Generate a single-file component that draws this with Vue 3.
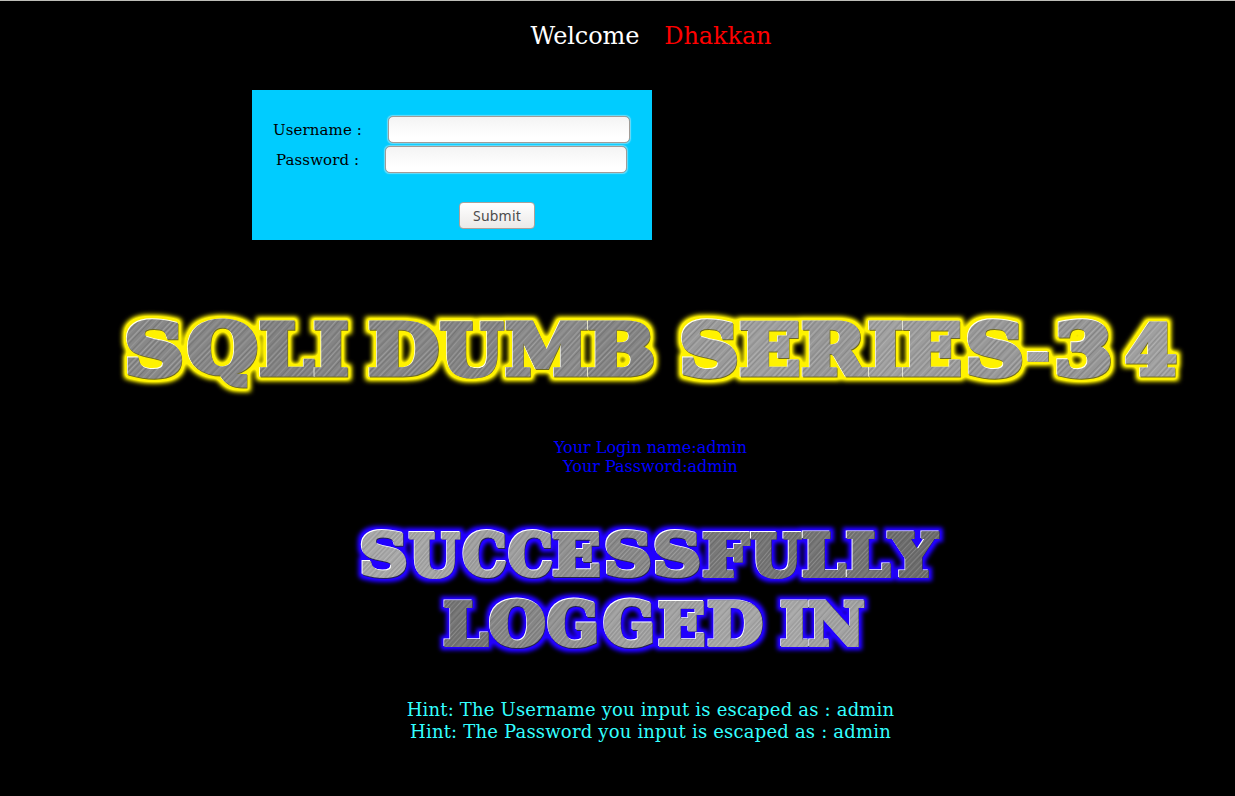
<script setup>
const FAMILY = '"DejaVu Serif", serif'
const SIZE = 80
const ctx = document.createElement('canvas').getContext('2d')
// Measured at a large size so that the ink box keeps its sub-pixel precision.
const MEASURE = 8
ctx.font = `bold ${SIZE * MEASURE}px ${FAMILY}`

// Stretches one character so that its outlined ink fills the box x1..x2, y1..y2.
function glyph([char, x1, x2, y1, y2, tone], weight) {
  const m = ctx.measureText(char)
  const h = weight / 2
  const left = -m.actualBoundingBoxLeft / MEASURE - h
  const right = m.actualBoundingBoxRight / MEASURE + h
  const top = -m.actualBoundingBoxAscent / MEASURE - h
  const bottom = m.actualBoundingBoxDescent / MEASURE + h
  const sx = (x2 - x1) / (right - left)
  const sy = (y2 - y1) / (bottom - top)
  return {
    char,
    tone: `rgb(${tone}, ${tone}, ${tone})`,
    matrix: `matrix(${sx} 0 0 ${sy} ${x1 - left * sx} ${y1 - top * sy})`
  }
}

const title = [
  ['S', 126.5, 182.5, 319, 379, 136], ['Q', 187, 257, 319, 389, 134],
  ['L', 260, 315, 321.5, 377, 130], ['I', 314.5, 347.5, 321.5, 377, 132],
  ['D', 369.3, 438.5, 321.5, 377, 134], ['U', 440, 504.5, 321.5, 378.5, 132],
  ['M', 505, 587.5, 321.5, 377, 138], ['B', 588, 654, 321.5, 377, 132],
  ['S', 681.5, 737.5, 319, 379, 154], ['E', 740.5, 799.5, 321.5, 377, 158],
  ['R', 802.5, 869, 321.5, 377, 152], ['I', 869, 902, 321.5, 377, 160],
  ['E', 902.7, 961, 321.5, 377, 156], ['S', 967.5, 1022.7, 319, 379, 152],
  ['-', 1027.3, 1049, 351, 361.7, 164], ['3', 1056.7, 1111, 319, 379, 150],
  ['4', 1125, 1176.3, 321.5, 377, 160]
].map((g) => glyph(g, 6))

const success = [
  ['S', 361.5, 406.7, 529.5, 578, 168], ['U', 409, 460.7, 531.5, 578.5, 166],
  ['C', 462.7, 506, 529.5, 578, 160], ['C', 508.3, 552, 529.5, 578, 158],
  ['E', 553.3, 600, 531.5, 577, 144], ['S', 606, 650.7, 529.5, 578, 136],
  ['S', 655, 700, 529.5, 578, 136], ['F', 703.3, 750.7, 531.5, 577.5, 120],
  ['U', 750.7, 802.5, 531.5, 578.5, 116], ['L', 802.7, 846.7, 531.5, 577.5, 116],
  ['L', 846.7, 891, 531.5, 577.5, 116], ['Y', 886.7, 940, 531.5, 577.5, 108],
  ['L', 444.3, 489, 600.5, 646.5, 116], ['O', 489, 545, 598.5, 648, 134],
  ['G', 547.3, 596.7, 598.5, 648, 146], ['G', 603.3, 652.7, 598.5, 648, 160],
  ['E', 659, 704.7, 600.5, 646.5, 162], ['D', 708.3, 762.7, 600.5, 646.5, 166],
  ['I', 781, 808.3, 600.5, 646.5, 168], ['N', 808.3, 864.3, 600.5, 646.5, 162]
].map((g) => glyph(g, 5.5))

const scratches = [
  [0, '#fff', 0.2], [2, '#000', 0.12], [4, '#fff', 0.1], [7, '#000', 0.08],
  [9, '#fff', 0.22], [11, '#000', 0.14], [15, '#fff', 0.12], [18, '#000', 0.12],
  [20, '#fff', 0.16], [25, '#000', 0.1], [27, '#fff', 0.2], [29, '#000', 0.14]
]
</script>

<template>
  <main class="page">
    <header class="welcome"><span>Welcome</span><span class="name">Dhakkan</span></header>

    <form class="login" @submit.prevent>
      <label class="row user"><span>Username :</span><input type="text" /></label>
      <label class="row pass"><span>Password :</span><input type="password" /></label>
      <button class="submit" type="submit">Submit</button>
    </form>

    <svg class="banner title" viewBox="100 300 1100 110" width="1100" height="110">
      <defs>
        <pattern id="brushed" width="31" height="50" patternUnits="userSpaceOnUse" patternTransform="rotate(40)">
          <rect v-for="s in scratches" :key="s[0]" :x="s[0]" y="0" width="1.1" height="50" :fill="s[1]" :fill-opacity="s[2]" />
        </pattern>
        <filter id="yellow-glow" filterUnits="userSpaceOnUse" x="100" y="300" width="1100" height="110" color-interpolation-filters="sRGB">
          <feMorphology in="SourceAlpha" operator="dilate" radius="3" />
          <feGaussianBlur stdDeviation="2.6" />
          <feColorMatrix values="0 0 0 0 1  0 0 0 0 .95  0 0 0 0 0  0 0 0 1.5 0" result="glow" />
          <feMerge><feMergeNode in="glow" /><feMergeNode in="SourceGraphic" /></feMerge>
        </filter>
      </defs>
      <g filter="url(#yellow-glow)">
        <g v-for="(g, i) in title" :key="i">
          <g transform="translate(-.8 -.8)"><text :transform="g.matrix" fill="#fffff0" stroke="#fffff0" aria-hidden="true">{{ g.char }}</text></g>
          <g transform="translate(.6 .6)"><text :transform="g.matrix" fill="#706a20" stroke="#706a20" aria-hidden="true">{{ g.char }}</text></g>
          <text :transform="g.matrix" :fill="g.tone" :stroke="g.tone">{{ g.char }}</text>
          <text :transform="g.matrix" fill="none" stroke="url(#brushed)" aria-hidden="true">{{ g.char }}</text>
          <text :transform="g.matrix" class="core" :fill="g.tone" aria-hidden="true">{{ g.char }}</text>
          <text :transform="g.matrix" class="core" fill="url(#brushed)" aria-hidden="true">{{ g.char }}</text>
        </g>
      </g>
    </svg>

    <section class="account">
      <div>Your Login name:admin</div>
      <div>Your Password:admin</div>
    </section>

    <svg class="banner success" viewBox="340 510 620 150" width="620" height="150">
      <defs>
        <filter id="blue-glow" filterUnits="userSpaceOnUse" x="340" y="510" width="620" height="150" color-interpolation-filters="sRGB">
          <feMorphology in="SourceAlpha" operator="dilate" radius="3" />
          <feGaussianBlur stdDeviation="1.9" />
          <feColorMatrix values="0 0 0 0 .13  0 0 0 0 0  0 0 0 0 1  0 0 0 1.15 0" result="glow" />
          <feMerge><feMergeNode in="glow" /><feMergeNode in="SourceGraphic" /></feMerge>
        </filter>
      </defs>
      <g filter="url(#blue-glow)">
        <g v-for="(g, i) in success" :key="i">
          <g transform="translate(-.8 -.8)"><text :transform="g.matrix" fill="#fff" stroke="#fff" aria-hidden="true">{{ g.char }}</text></g>
          <g transform="translate(.6 .6)"><text :transform="g.matrix" fill="#25234c" stroke="#25234c" aria-hidden="true">{{ g.char }}</text></g>
          <text :transform="g.matrix" :fill="g.tone" :stroke="g.tone">{{ g.char }}</text>
          <text :transform="g.matrix" fill="none" stroke="url(#brushed)" aria-hidden="true">{{ g.char }}</text>
          <text :transform="g.matrix" class="core" :fill="g.tone" aria-hidden="true">{{ g.char }}</text>
          <text :transform="g.matrix" class="core" fill="url(#brushed)" aria-hidden="true">{{ g.char }}</text>
        </g>
      </g>
    </svg>

    <section class="hint">
      <div>Hint: The Username you input is escaped as : admin</div>
      <div>Hint: The Password you input is escaped as : admin</div>
    </section>
  </main>
</template>

<style>
body { background: #000; }
</style>

<style scoped>
.page {
  box-sizing: border-box;
  height: 796px;
  overflow: hidden;
  border-top: 1px solid #bdbdb8;
  background: #000;
  font-family: "DejaVu Serif", serif;
  display: flex;
  flex-direction: column;
}
.welcome {
  display: flex;
  justify-content: center;
  gap: 25px;
  padding: 21px 0 0 67px;
  height: 69px;
  font-size: 24px;
  line-height: 28px;
  letter-spacing: -0.1px;
  color: #fff;
  flex: none;
  box-sizing: border-box;
}
.name { color: #f00; }
.login {
  box-sizing: border-box;
  width: 400px;
  height: 150px;
  flex: none;
  margin: 20px 0 0 252px;
  padding-top: 26px;
  background: #0cf;
  color: #000;
  font-size: 15px;
  letter-spacing: 0.1px;
}
.row {
  display: flex;
  align-items: center;
  height: 28px;
  margin-bottom: 2px;
}
.user { padding-left: 21px; }
.pass { padding-left: 24px; }
.user span { width: 115px; white-space: nowrap; }
.pass span { width: 109px; white-space: nowrap; }
input {
  box-sizing: border-box;
  width: 242px;
  height: 27px;
  margin: 0 0 1px;
  border: 1px solid #a29c97;
  border-radius: 5px;
  background: linear-gradient(#f4f4f4, #fff 80%);
  box-shadow: 0 0 1px 0.5px #6fdcf8;
  outline: none;
}
.submit {
  display: block;
  box-sizing: border-box;
  width: 76px;
  height: 27px;
  margin: 28px 0 0 207px;
  padding: 0;
  border: 1px solid #aaa19b;
  border-radius: 4px;
  background: linear-gradient(#fff, #ebe9e8);
  color: #4c4c4c;
  font: 14px/25px "Noto Sans", sans-serif;
  letter-spacing: 0.2px;
}
.banner { display: block; flex: none; }
.banner text {
  font: bold 80px "DejaVu Serif", serif;
  stroke-width: 6px;
  stroke-linejoin: miter;
  stroke-miterlimit: 2;
}
.success text { stroke-width: 5.5px; }
.banner .core { stroke: none; }
.title { margin: 60px 0 0 100px; }
.account {
  margin-top: 28px;
  padding-left: 66px;
  text-align: center;
  color: #00f;
  font-size: 16px;
  line-height: 19px;
}
.success { margin: 34px 0 0 340px; }
.hint {
  margin-top: 39px;
  padding-left: 66px;
  text-align: center;
  color: #3ff;
  font-size: 18px;
  line-height: 22px;
  letter-spacing: 0.19px;
}
</style>
